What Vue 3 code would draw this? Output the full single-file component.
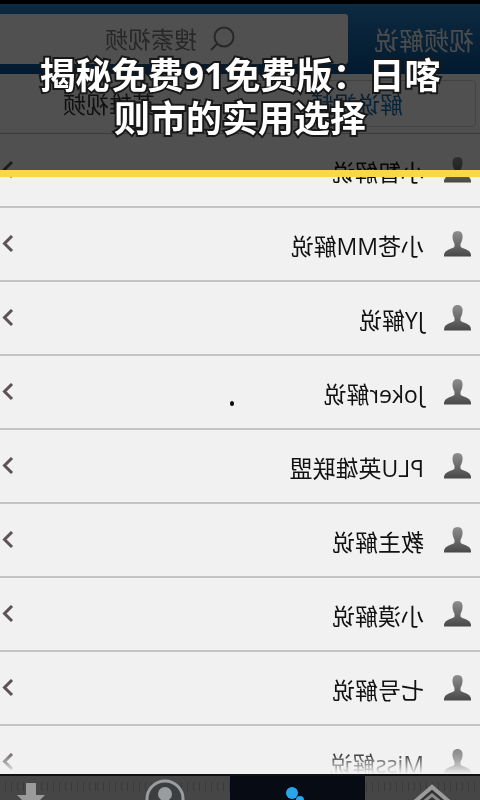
<script setup>
import { ref } from 'vue'

const keyword = ref('')

const tabs = ['解说视频', '英雄视频']
const activeTab = ref(0)

const commentators = [
  '小智解说',
  '小苍MM解说',
  'JY解说',
  'Joker解说',
  'PLU英雄联盟',
  '教主解说',
  '小漠解说',
  '七号解说',
  'Miss解说'
]
</script>

<template>
  <main class="cover">
    <!-- the app behind the caption is shown flipped -->
    <div class="app-screen">
      <header class="top-bar">
        <h2 class="top-title">视频解说</h2>
        <label class="search-box">
          <svg class="search-icon" viewBox="0 0 26 26">
            <circle cx="11" cy="11" r="9.5" />
            <path d="M18 18L24 24" />
          </svg>
          <input v-model="keyword" type="text" placeholder="搜索视频" aria-label="搜索视频" />
        </label>
      </header>

      <div class="tabs">
        <button
          v-for="(tab, index) in tabs"
          :key="tab"
          class="tab"
          :class="{ active: index === activeTab }"
          @click="activeTab = index"
        >{{ tab }}</button>
      </div>

      <ul class="list">
        <li v-for="name in commentators" :key="name" class="row">
          <svg class="avatar" viewBox="0 0 27 26">
            <path d="M13.500 0C17.300 0 18.800 2.800 18.500 6.500C18.300 9.500 17.200 11.500 16.500 12.800V15.500C17.500 17.500 23 18 25.500 20.500Q27 22 27 25.500H0Q0 22 1.500 20.500C4 18 9.500 17.500 10.500 15.500V12.800C9.800 11.500 8.700 9.500 8.500 6.500C8.200 2.800 9.700 0 13.500 0Z" fill="url(#avatarFill)" />
          </svg>
          <span class="name">{{ name }}</span>
          <svg class="chevron" viewBox="0 0 12 18">
            <path d="M2 1L9.500 8.500L2 16" />
          </svg>
        </li>
      </ul>

      <nav class="bottom-nav">
        <button class="nav-item" aria-label="首页">
          <svg viewBox="0 0 44 26">
            <path d="M1 29L22 11L43 29" fill="#333" stroke="#9b9b9b" stroke-width="4" />
            <path d="M11 28L22 19L33 28" fill="none" stroke="#8a8a8a" stroke-width="3" />
          </svg>
        </button>
        <button class="nav-item current" aria-label="解说">
          <svg viewBox="0 0 44 26">
            <circle cx="28" cy="17" r="6" fill="#2ba5ea" />
            <circle cx="20" cy="24" r="4" fill="#2ba5ea" />
          </svg>
        </button>
        <button class="nav-item" aria-label="我的">
          <svg viewBox="0 0 44 26">
            <circle cx="20" cy="23" r="18" fill="#3c3e40" stroke="#9a9da0" stroke-width="3" />
            <circle cx="20" cy="18" r="7" fill="#9a9da0" />
          </svg>
        </button>
        <button class="nav-item" aria-label="下载">
          <svg viewBox="0 0 44 26">
            <path d="M15 7H25V19H34L20 33L6 19H15Z" fill="#9a9a9a" />
          </svg>
        </button>
      </nav>
    </div>

    <svg class="defs" width="0" height="0" aria-hidden="true">
      <linearGradient id="avatarFill" x1="0" y1="0" x2="0" y2="1">
        <stop offset="0" stop-color="#8e8e8e" />
        <stop offset="1" stop-color="#484848" />
      </linearGradient>
    </svg>

    <div class="caption">
      <h1>揭秘免费91免费版：日喀则市的实用选择</h1>
    </div>
    <span class="dot"></span>
  </main>
</template>

<style>
body {
  margin: 0;
  background: #f1f1f1;
}
</style>

<style scoped>
.cover {
  position: relative;
  height: 100vh;
  overflow: hidden;
  font-family: 'Open Sans', 'Noto Sans CJK SC', sans-serif;
}

.app-screen {
  display: flex;
  flex-direction: column;
  height: 100%;
  background: #f1f1f1;
  transform: scaleX(-1);
}

button {
  border: none;
  padding: 0;
  font: inherit;
}

.top-bar {
  display: flex;
  align-items: center;
  gap: 26px;
  box-sizing: border-box;
  height: 74px;
  padding: 0 0 0 6px;
  border-top: 4px solid #000;
  background: linear-gradient(#2a80c4, #08508f);
  flex-shrink: 0;
}

.top-title {
  margin: 0;
  padding-top: 2px;
  color: #e6e6e6;
  font-size: 25px;
  font-weight: 400;
  line-height: 36px;
  white-space: nowrap;
}

.search-box {
  display: flex;
  align-items: center;
  flex: 1;
  min-width: 0;
  height: 50px;
  background: #f1f1f1;
  border-radius: 3px 0 0 3px;
}

.search-icon {
  width: 26px;
  height: 26px;
  margin: 0 12px 0 113px;
  flex-shrink: 0;
  fill: none;
  stroke: #777;
  stroke-width: 2;
}

.search-box input {
  flex: 1;
  min-width: 0;
  border: none;
  padding: 0;
  outline: none;
  background: transparent;
  font: inherit;
  font-size: 23px;
}

.search-box input::placeholder {
  color: #777;
  opacity: 1;
}

.tabs {
  display: flex;
  gap: 10px;
  box-sizing: border-box;
  height: 60px;
  padding: 6px 0 6px 4px;
  border-bottom: 1px solid #b4b4b4;
  flex-shrink: 0;
}

.tab {
  flex: 0 0 50%;
  border: 1px solid transparent;
  border-radius: 4px;
  background: transparent;
  color: #333;
  font-size: 23px;
  line-height: 44px;
}

.tab.active {
  border-color: #ccc;
  color: #1a68a6;
}

.list {
  flex: 1;
  min-height: 0;
  margin: 0;
  padding: 0;
  overflow: hidden;
  list-style: none;
  mask-image: linear-gradient(#000 calc(100% - 24px), transparent);
}

.row {
  display: flex;
  align-items: center;
  box-sizing: border-box;
  height: 74px;
  padding: 0 2px 0 9px;
  border-bottom: 2px solid #c4c4c4;
}

.avatar {
  width: 27px;
  height: 26px;
  flex-shrink: 0;
}

.name {
  flex: 1;
  margin-left: 20px;
  padding-top: 4px;
  color: #111;
  font-size: 23px;
  line-height: 36px;
}

.chevron {
  width: 12px;
  height: 18px;
  fill: none;
  stroke: #5c5454;
  stroke-width: 3;
}

.bottom-nav {
  display: flex;
  box-sizing: border-box;
  height: 26px;
  border-top: 2px solid #111;
  background: #464646;
  overflow: hidden;
  flex-shrink: 0;
}

.nav-item {
  flex: 0 0 28%;
  background: repeating-linear-gradient(90deg, #3a3a3a 0 1px, transparent 1px 6px) 0 6px / 100% 9px no-repeat;
}

.nav-item:first-child {
  margin-left: -4%;
}

.nav-item.current {
  background: #060b14;
}

.nav-item svg {
  display: block;
  width: 44px;
  height: 26px;
  margin: 0 auto;
}

.defs {
  position: absolute;
}

.caption {
  position: absolute;
  top: 0;
  left: 0;
  right: 0;
  box-sizing: border-box;
  padding: 54px 32px 30px;
  border-bottom: 7px solid #ffd54a;
  background: rgba(0, 0, 0, 0.67);
}

.caption h1 {
  margin: 0;
  color: #fff;
  font-size: 36px;
  font-weight: 700;
  line-height: 43px;
  text-align: center;
  -webkit-text-stroke: 4px #181818;
  paint-order: stroke fill;
}

.dot {
  position: absolute;
  top: 401px;
  left: 230px;
  width: 4px;
  height: 5px;
  border-radius: 50%;
  background: #000;
}
</style>
